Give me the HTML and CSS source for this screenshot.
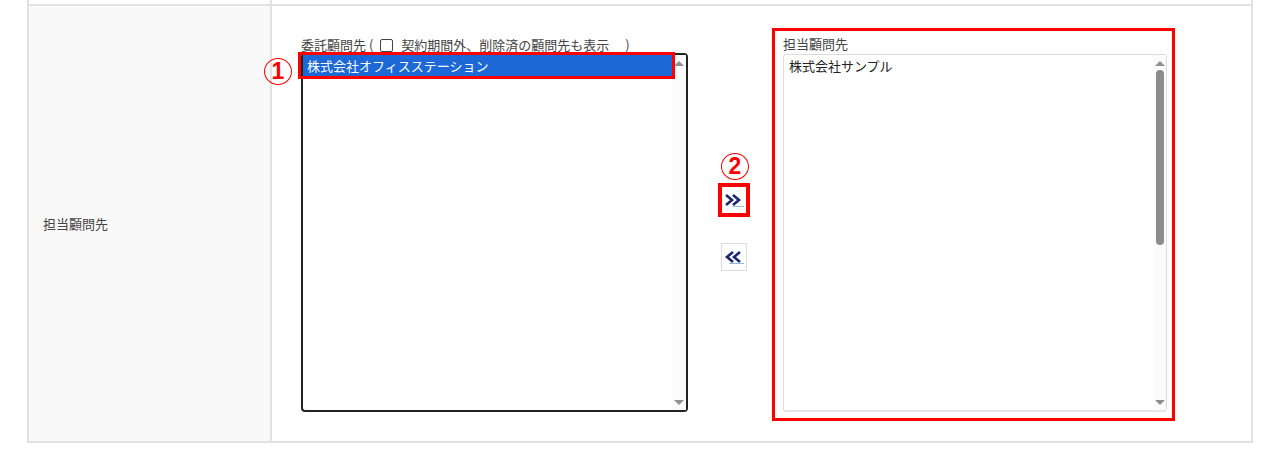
FILE: index.html
```html
<!DOCTYPE html>
<html lang="ja">
<head>
    <meta charset="UTF-8">
    <title>担当顧問先</title>
    <link rel="stylesheet" href="styles.css">
</head>
<body>
    <div class="table">
        <div class="row row-prev">
            <div class="cell-label"></div>
            <div class="cell-value"></div>
        </div>
        <div class="row">
            <div class="cell-label">担当顧問先</div>
            <div class="cell-value">
                <div class="list-group list-source">
                    <div class="list-caption">委託顧問先 (<span class="checkbox"></span>契約期間外、削除済の顧問先も表示<span class="gap"></span>)</div>
                    <div class="listbox listbox-dark">
                        <div class="options">
                            <div class="option selected">株式会社オフィスステーション<span class="mark mark-one">1</span></div>
                        </div>
                        <div class="scroll">
                            <span class="arrow arrow-up"></span>
                            <span class="track"></span>
                            <span class="arrow arrow-down"></span>
                        </div>
                    </div>
                </div>

                <div class="move-buttons">
                    <span class="mark">2</span>
                    <button class="move-btn highlighted" type="button">
                        <svg width="20" height="16" viewBox="0 0 20 16"><polyline points="2,3 8,8 2,13" fill="none" stroke="#1c2774" stroke-width="2.6"/><polyline points="9,3 15,8 9,13" fill="none" stroke="#1c2774" stroke-width="2.6"/><line x1="9" y1="14.5" x2="20" y2="14.5" stroke="#8ab8e8" stroke-width="1"/></svg>
                    </button>
                    <button class="move-btn" type="button">
                        <svg width="20" height="16" viewBox="0 0 20 16"><polyline points="9,3 3,8 9,13" fill="none" stroke="#1c2774" stroke-width="2.6"/><polyline points="16,3 10,8 16,13" fill="none" stroke="#1c2774" stroke-width="2.6"/><line x1="5" y1="14.5" x2="20" y2="14.5" stroke="#8ab8e8" stroke-width="1"/></svg>
                    </button>
                </div>

                <div class="list-group list-target">
                    <div class="list-caption">担当顧問先</div>
                    <div class="listbox listbox-light">
                        <div class="options">
                            <div class="option">株式会社サンプル</div>
                        </div>
                        <div class="scroll">
                            <span class="arrow arrow-up"></span>
                            <span class="track"><span class="thumb"></span></span>
                            <span class="arrow arrow-down"></span>
                        </div>
                    </div>
                </div>
            </div>
        </div>
    </div>
</body>
</html>
```

FILE: styles.css
```css
* { margin: 0; padding: 0; box-sizing: border-box; }
body { background: #fff; color: #333; font-family: "Noto Sans CJK JP", "Liberation Sans", sans-serif; font-size: 13px; }

.table { margin-left: 27px; width: 1226px; }
.row { display: flex; border-left: 2px solid #e2e2e2; border-right: 2px solid #e2e2e2; border-top: 2px solid #e2e2e2; border-bottom: 2px solid #e2e2e2; height: 439px; }
.row-prev { height: 4px; border-top: none; border-bottom: none; }
.cell-label { width: 243px; flex-shrink: 0; background: #f9f9f9; border-right: 2px solid #e2e2e2; display: flex; align-items: center; padding-left: 14px; color: #444; }
.row-prev .cell-label { background: #fff; }
.cell-value { flex: 1; display: flex; align-items: flex-start; padding-left: 29px; }

.list-caption { line-height: 16px; height: 16px; color: #444; white-space: nowrap; display: flex; align-items: center; }
.checkbox { display: inline-block; width: 13px; height: 13px; border: 1px solid #444; border-radius: 2px; margin: 0 8px 0 7px; }
.gap { display: inline-block; width: 16px; }

.list-source { margin-top: 31px; width: 387px; }
.listbox { display: flex; background: #fff; }
.listbox-dark { height: 359px; border: 2px solid #222; border-radius: 4px; }
.listbox-light { height: 358px; border: 1px solid #dcdcdc; border-bottom: 2px solid #e6e6e6; border-radius: 3px; }

.options { flex: 1; }
.option { position: relative; height: 22px; line-height: 22px; padding-left: 4px; white-space: nowrap; color: #222; }
.option.selected { background: #1b68d6; color: #fff; }
.option.selected::after { content: ""; position: absolute; top: -3px; left: -5px; right: -3px; bottom: -2px; border: 3px solid #f00; }
.listbox-light .option { padding-left: 5px; }

.scroll { width: 14px; background: #fbfbfb; display: flex; flex-direction: column; align-items: center; padding: 6px 0 5px; }
.track { flex: 1; width: 100%; display: flex; justify-content: center; padding-top: 4px; }
.thumb { width: 8px; height: 175px; background: #8c8c8c; border-radius: 4px; }
.arrow { width: 0; height: 0; border-left: 5px solid transparent; border-right: 5px solid transparent; }
.arrow-up { border-bottom: 5px solid #8f8f8f; }
.arrow-down { border-top: 5px solid #8f8f8f; }

.mark { display: flex; align-items: center; justify-content: center; width: 28px; height: 27px; border: 1px solid #f00; border-radius: 50%; color: #f00; font-family: "Liberation Sans", sans-serif; font-weight: bold; font-size: 23px; line-height: 1; }
.mark-one { position: absolute; left: -39px; top: 3px; }

.move-buttons { margin-left: 33px; margin-top: 147px; width: 30px; display: flex; flex-direction: column; align-items: flex-start; }
.move-btn { width: 26px; height: 28px; margin-top: 29px; background: #fff; border: 1px solid #ddd; display: flex; align-items: center; justify-content: center; cursor: pointer; }
.move-btn.highlighted { margin-top: 6px; border-color: #f00; outline: 3px solid #f00; }

.list-target { margin-left: 21px; margin-top: 22px; width: 403px; height: 393px; border: 3px solid #f00; padding: 5px 5px 0 8px; }
.list-target .list-caption { margin-bottom: 2px; }
.list-target .scroll { width: 12px; }
```
